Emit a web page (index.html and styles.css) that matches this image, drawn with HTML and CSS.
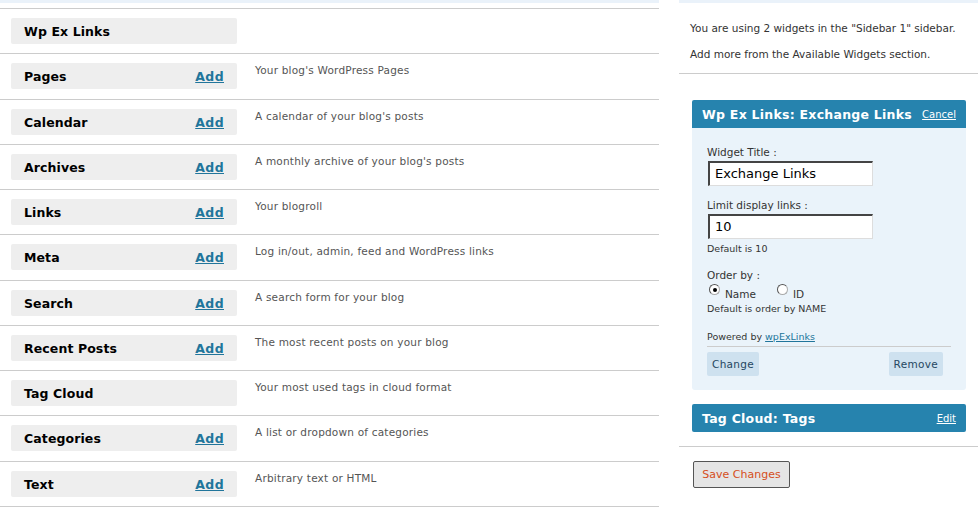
FILE: index.html
```html
<!DOCTYPE html>
<html>
<head>
<meta charset="utf-8">
<link rel="stylesheet" href="styles.css">
</head>
<body>
<div class="page">
  <div class="left">
    <div class="band"></div>
    <div class="list">
      <div class="row"><div class="wbox"><span class="wname">Wp Ex Links</span></div><div class="desc"></div></div>
      <div class="row"><div class="wbox"><span class="wname">Pages</span><a class="add" href="#">Add</a></div><div class="desc">Your blog's WordPress Pages</div></div>
      <div class="row"><div class="wbox"><span class="wname">Calendar</span><a class="add" href="#">Add</a></div><div class="desc">A calendar of your blog's posts</div></div>
      <div class="row"><div class="wbox"><span class="wname">Archives</span><a class="add" href="#">Add</a></div><div class="desc">A monthly archive of your blog's posts</div></div>
      <div class="row"><div class="wbox"><span class="wname">Links</span><a class="add" href="#">Add</a></div><div class="desc">Your blogroll</div></div>
      <div class="row"><div class="wbox"><span class="wname">Meta</span><a class="add" href="#">Add</a></div><div class="desc">Log in/out, admin, feed and WordPress links</div></div>
      <div class="row"><div class="wbox"><span class="wname">Search</span><a class="add" href="#">Add</a></div><div class="desc">A search form for your blog</div></div>
      <div class="row"><div class="wbox"><span class="wname">Recent Posts</span><a class="add" href="#">Add</a></div><div class="desc">The most recent posts on your blog</div></div>
      <div class="row"><div class="wbox"><span class="wname">Tag Cloud</span></div><div class="desc">Your most used tags in cloud format</div></div>
      <div class="row"><div class="wbox"><span class="wname">Categories</span><a class="add" href="#">Add</a></div><div class="desc">A list or dropdown of categories</div></div>
      <div class="row last"><div class="wbox"><span class="wname">Text</span><a class="add" href="#">Add</a></div><div class="desc">Arbitrary text or HTML</div></div>
    </div>
  </div>
  <div class="right">
    <div class="band"></div>
    <div class="info">
      <p>You are using 2 widgets in the "Sidebar 1" sidebar.</p>
      <p>Add more from the Available Widgets section.</p>
    </div>
    <div class="sidebar">
      <div class="widget">
        <div class="whead"><span class="wtitle">Wp Ex Links: Exchange Links</span><a class="hlink" href="#">Cancel</a></div>
        <div class="wbody">
          <label class="lbl">Widget Title :</label>
          <div class="input">Exchange Links</div>
          <label class="lbl">Limit display links :</label>
          <div class="input">10</div>
          <div class="small">Default is 10</div>
          <label class="lbl order">Order by :</label>
          <div class="radios">
            <span class="radio checked"></span><span class="rlabel">Name</span>
            <span class="radio"></span><span class="rlabel">ID</span>
          </div>
          <div class="small">Default is order by NAME</div>
          <div class="powered">Powered by <a href="#">wpExLinks</a></div>
          <div class="actions">
            <span class="btn">Change</span>
            <span class="btn">Remove</span>
          </div>
        </div>
      </div>
      <div class="widget closed">
        <div class="whead"><span class="wtitle">Tag Cloud: Tags</span><a class="hlink" href="#">Edit</a></div>
      </div>
    </div>
    <div class="submit">
      <span class="save">Save Changes</span>
    </div>
  </div>
</div>
</body>
</html>
```

FILE: styles.css
```css
* { box-sizing: border-box; }
body {
  margin: 0;
  background: #fff;
  font-family: "DejaVu Sans", Verdana, sans-serif;
  color: #333;
}
.page {
  display: flex;
  gap: 20px;
  width: 978px;
  height: 508px;
  overflow: hidden;
}
.left { width: 659px; flex: none; }
.right { flex: 1; }
.band { height: 3px; background: #eaf2fa; }
.list { margin-top: 5px; }
.row {
  display: flex;
  align-items: flex-start;
  height: 45.27px;
  border-top: 1px solid #ccc;
  padding: 9px 0 0 11px;
}
.row.last { border-bottom: 1px solid #ccc; height: 46.5px; }
.wbox {
  width: 226px;
  height: 26px;
  background: #eee;
  border-radius: 2px;
  display: flex;
  align-items: center;
  justify-content: space-between;
  padding: 1px 13px 0 13px;
}
.wname {
  font-weight: bold;
  font-size: 12.5px;
  color: #000;
  letter-spacing: 0.1px;
}
.add {
  font-weight: bold;
  font-size: 12.5px;
  color: #21759b;
  text-decoration: underline;
  letter-spacing: 0.4px;
}
.desc {
  margin-left: 18px;
  font-size: 10.5px;
  line-height: 13px;
  color: #555;
  margin-top: 1px;
  letter-spacing: 0.2px;
}
.info {
  padding: 19px 0 0 11px;
  border-bottom: 1px solid #ccc;
  height: 71px;
}
.info p {
  margin: 0 0 13px 0;
  font-size: 10.5px;
  line-height: 13px;
  color: #333;
}
.sidebar {
  padding: 26px 12px 0 13px;
  border-bottom: 1px solid #ccc;
  height: 373px;
}
.widget { margin-bottom: 14px; }
.whead {
  height: 28px;
  background: #2683ae;
  border-radius: 2px 2px 0 0;
  display: flex;
  align-items: center;
  justify-content: space-between;
  padding: 1px 10px 0 10px;
}
.widget.closed .whead { border-radius: 2px; }
.wtitle {
  color: #fff;
  font-weight: bold;
  font-size: 12.5px;
  letter-spacing: 0.25px;
}
.hlink {
  color: #fff;
  font-size: 10px;
  text-decoration: underline;
}
.wbody {
  background: #eaf3fa;
  border-radius: 0 0 3px 3px;
  padding: 18px 15px 14px 15px;
}
.lbl {
  display: block;
  font-size: 10.5px;
  line-height: 13px;
  color: #333;
}
.input {
  width: 165px;
  height: 25px;
  margin: 2px 0 13px 1px;
  background: #fff;
  border-top: 2px solid #444;
  border-left: 2px solid #444;
  border-right: 1px solid #ddd;
  border-bottom: 1px solid #ddd;
  font-size: 13px;
  line-height: 21px;
  padding-left: 5px;
  color: #000;
}
.input + .small { margin-top: -9px; }
.small {
  font-size: 9.5px;
  line-height: 12px;
  color: #333;
}
.order { margin-top: 14px; }
.radios {
  display: flex;
  align-items: flex-start;
  height: 20px;
  margin-top: 1px;
  padding-left: 2px;
}
.radio {
  width: 11px;
  height: 11px;
  border-radius: 50%;
  border: 1px solid #aaa;
  border-top-color: #555;
  border-left-color: #555;
  background: #fff;
  position: relative;
  margin-top: 1px;
}
.radio.checked::after {
  content: "";
  position: absolute;
  left: 2.5px;
  top: 2.5px;
  width: 4px;
  height: 4px;
  border-radius: 50%;
  background: #000;
}
.rlabel {
  font-size: 10.5px;
  line-height: 13px;
  margin-top: 5px;
  margin-left: 5px;
  margin-right: 21px;
  color: #333;
}
.powered {
  margin-top: 16px;
  font-size: 9.5px;
  line-height: 12px;
  color: #333;
  padding-bottom: 3px;
  border-bottom: 1px solid #ccc;
}
.powered a { color: #21759b; text-decoration: underline; }
.actions {
  display: flex;
  justify-content: space-between;
  margin-top: 5px;
  padding-right: 8px;
}
.btn {
  background: #cee1ef;
  border-radius: 2px;
  height: 24px;
  padding: 0 5px;
  font-size: 10.5px;
  line-height: 25px;
  color: #264761;
  letter-spacing: 0.3px;
}
.submit { padding: 14px 0 0 14px; }
.save {
  display: inline-block;
  height: 27px;
  width: 97px;
  border: 1px solid #555;
  border-radius: 2px;
  background: #e5e5e5;
  color: #d54e21;
  font-size: 11px;
  line-height: 25px;
  text-align: center;
}
```
